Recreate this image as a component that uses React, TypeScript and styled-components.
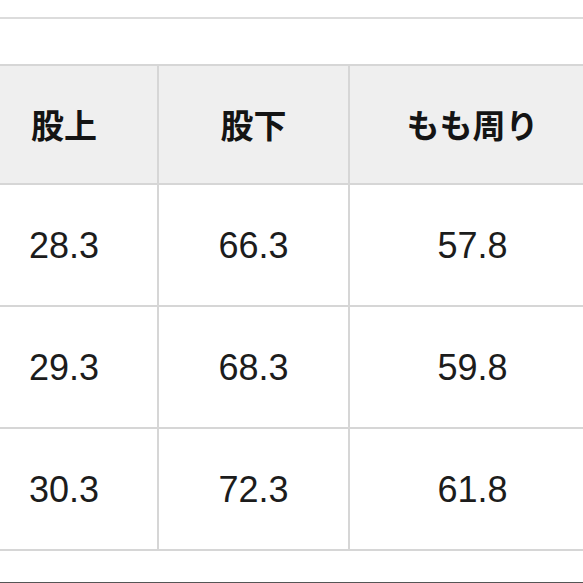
import styled, { createGlobalStyle } from "styled-components"

const GlobalStyle = createGlobalStyle`
  html, body {
    margin: 0;
    padding: 0;
    background: #ffffff;
  }
  body {
    width: 583px;
    height: 583px;
    overflow: hidden;
    font-family: "Liberation Sans", "Noto Sans CJK JP", sans-serif;
  }
`

const sizes = [
  { top: "股上", values: ["28.3", "29.3", "30.3"] },
  { top: "股下", values: ["66.3", "68.3", "72.3"] },
  { top: "もも周り", values: ["57.8", "59.8", "61.8"] },
]

export default function App() {
  return (
    <>
      <GlobalStyle />
      <Page>
        <TopRule />
        <SizeTable>
          <colgroup>
            <col style={{ width: 188 }} />
            <col style={{ width: 191 }} />
            <col style={{ width: 247 }} />
          </colgroup>
          <thead>
            <tr>
              {sizes.map((s) => (
                <HeadCell key={s.top}>{s.top}</HeadCell>
              ))}
            </tr>
          </thead>
          <tbody>
            {[0, 1, 2].map((row) => (
              <tr key={row}>
                {sizes.map((s) => (
                  <Cell key={s.top}>{s.values[row]}</Cell>
                ))}
              </tr>
            ))}
          </tbody>
        </SizeTable>
        <BottomRule />
      </Page>
    </>
  )
}

const Page = styled.div`
  width: 583px;
  height: 583px;
  overflow: hidden;
  padding-top: 17px;
  box-sizing: border-box;
`

const TopRule = styled.div`
  height: 2px;
  background: #dcdcdc;
  margin-bottom: 45px;
`

const SizeTable = styled.table`
  border-collapse: collapse;
  table-layout: fixed;
  width: 626px;
  margin-left: -31px;
`

const HeadCell = styled.th`
  height: 115px;
  padding: 0 0 2px;
  border: 2px solid #d6d6d6;
  background: #efefef;
  font-family: "Noto Sans CJK JP", sans-serif;
  font-size: 33px;
  font-weight: 700;
  color: #141414;
  text-align: center;
  vertical-align: middle;
`

const Cell = styled.td`
  height: 118px;
  padding: 2px 0 0;
  border: 2px solid #d6d6d6;
  font-family: "Liberation Sans", sans-serif;
  font-size: 36px;
  color: #1c1c1c;
  text-align: center;
  vertical-align: middle;
`

const BottomRule = styled.div`
  margin-top: 31px;
  height: 2px;
  background: #555555;
`
